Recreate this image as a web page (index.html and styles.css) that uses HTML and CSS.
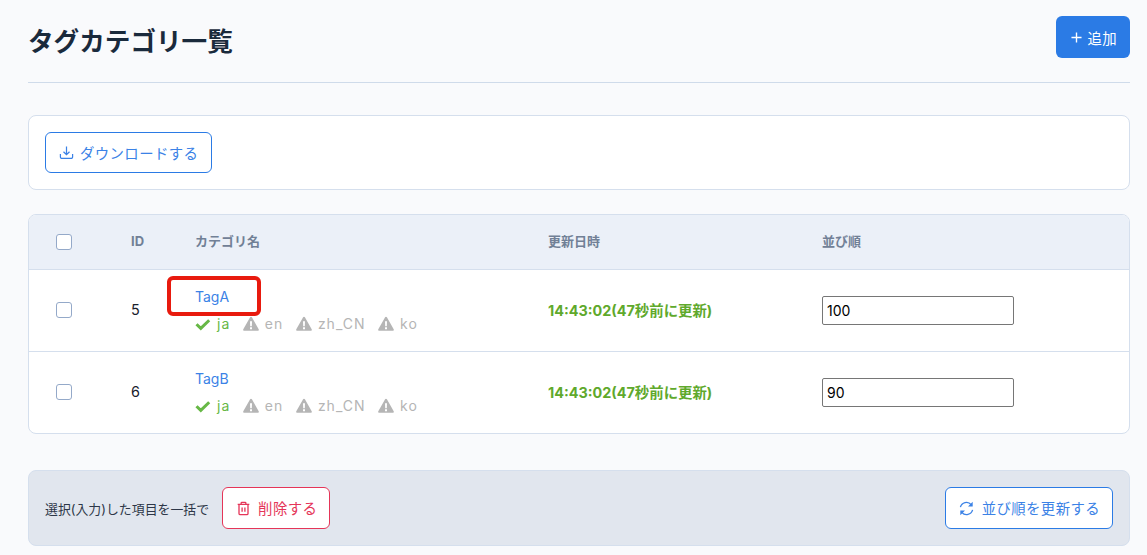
FILE: index.html
```html
<!DOCTYPE html>
<html lang="ja">
<head>
	<meta charset="utf-8">
	<meta name="viewport" content="width=device-width, initial-scale=1.0">
	<title>タグカテゴリ一覧</title>
	<link rel="stylesheet" href="styles.css">
</head>
<body>
	<div class="page">
		<header class="page-head">
			<h1>タグカテゴリ一覧</h1>
			<a class="btn btn-primary btn-add" href="#">
				<svg class="ico-plus" viewBox="0 0 12 12"><path d="M6 .5v11M.5 6h11" fill="none" stroke="currentColor" stroke-width="1.5"/></svg>
				追加
			</a>
		</header>

		<div class="card tools">
			<a class="btn btn-outline btn-tool" href="#">
				<svg class="ico" viewBox="0 0 16 16"><path d="M8 1.500v8.700M4.800 7.200 8 10.400l3.200-3.200M1.500 9.500v3.300a1.500 1.500 0 0 0 1.500 1.500h10a1.500 1.500 0 0 0 1.500-1.500V9.500" fill="none" stroke="currentColor" stroke-width="1.300"/></svg>
				ダウンロードする
			</a>
		</div>

		<div class="card list">
			<table>
				<colgroup>
					<col class="col-check">
					<col class="col-id">
					<col class="col-name">
					<col class="col-date">
					<col>
				</colgroup>
				<thead>
					<tr>
						<th><span class="check"></span></th>
						<th>ID</th>
						<th>カテゴリ名</th>
						<th>更新日時</th>
						<th>並び順</th>
					</tr>
				</thead>
				<tbody>
					<tr>
						<td><span class="check"></span></td>
						<td class="cell-text">5</td>
						<td>
							<a class="tag-name" href="#">TagA</a>
							<div class="langs">
								<span class="lang lang-ok"><svg class="lang-ico" viewBox="0 0 16 16"><path d="M1.500 8.200 5.800 12.400 14.200 4.200" fill="none" stroke="currentColor" stroke-width="3"/></svg>ja</span>
								<span class="lang"><svg class="lang-ico" viewBox="0 0 16 16"><path fill-rule="evenodd" d="M8 .8c.4 0 .7.2.9.5l6.800 11.900c.4.7-.1 1.500-.9 1.500H1.200c-.8 0-1.300-.8-.9-1.500L7.100 1.300c.2-.3.5-.5.900-.5ZM7 5.200l.2 5h1.600l.2-5H7Zm0 6.100v1.900h2v-1.900H7Z" fill="currentColor"/></svg>en</span>
								<span class="lang"><svg class="lang-ico" viewBox="0 0 16 16"><path fill-rule="evenodd" d="M8 .8c.4 0 .7.2.9.5l6.800 11.900c.4.7-.1 1.500-.9 1.500H1.200c-.8 0-1.300-.8-.9-1.500L7.100 1.300c.2-.3.5-.5.900-.5ZM7 5.200l.2 5h1.600l.2-5H7Zm0 6.100v1.900h2v-1.900H7Z" fill="currentColor"/></svg>zh_CN</span>
								<span class="lang"><svg class="lang-ico" viewBox="0 0 16 16"><path fill-rule="evenodd" d="M8 .8c.4 0 .7.2.9.5l6.800 11.900c.4.7-.1 1.500-.9 1.500H1.200c-.8 0-1.300-.8-.9-1.500L7.100 1.300c.2-.3.5-.5.900-.5ZM7 5.200l.2 5h1.600l.2-5H7Zm0 6.100v1.900h2v-1.900H7Z" fill="currentColor"/></svg>ko</span>
							</div>
							<span class="highlight"></span>
						</td>
						<td class="cell-text updated">14:43:02(47秒前に更新)</td>
						<td><input class="order" type="text" value="100"></td>
					</tr>
					<tr>
						<td><span class="check"></span></td>
						<td class="cell-text">6</td>
						<td>
							<a class="tag-name" href="#">TagB</a>
							<div class="langs">
								<span class="lang lang-ok"><svg class="lang-ico" viewBox="0 0 16 16"><path d="M1.500 8.200 5.800 12.400 14.200 4.200" fill="none" stroke="currentColor" stroke-width="3"/></svg>ja</span>
								<span class="lang"><svg class="lang-ico" viewBox="0 0 16 16"><path fill-rule="evenodd" d="M8 .8c.4 0 .7.2.9.5l6.800 11.900c.4.7-.1 1.500-.9 1.500H1.200c-.8 0-1.300-.8-.9-1.500L7.100 1.300c.2-.3.5-.5.900-.5ZM7 5.200l.2 5h1.600l.2-5H7Zm0 6.100v1.900h2v-1.900H7Z" fill="currentColor"/></svg>en</span>
								<span class="lang"><svg class="lang-ico" viewBox="0 0 16 16"><path fill-rule="evenodd" d="M8 .8c.4 0 .7.2.9.5l6.800 11.900c.4.7-.1 1.500-.9 1.500H1.200c-.8 0-1.300-.8-.9-1.500L7.100 1.300c.2-.3.5-.5.900-.5ZM7 5.200l.2 5h1.600l.2-5H7Zm0 6.100v1.900h2v-1.900H7Z" fill="currentColor"/></svg>zh_CN</span>
								<span class="lang"><svg class="lang-ico" viewBox="0 0 16 16"><path fill-rule="evenodd" d="M8 .8c.4 0 .7.2.9.5l6.800 11.900c.4.7-.1 1.500-.9 1.500H1.200c-.8 0-1.300-.8-.9-1.500L7.100 1.300c.2-.3.5-.5.900-.5ZM7 5.200l.2 5h1.600l.2-5H7Zm0 6.100v1.900h2v-1.900H7Z" fill="currentColor"/></svg>ko</span>
							</div>
						</td>
						<td class="cell-text updated">14:43:02(47秒前に更新)</td>
						<td><input class="order" type="text" value="90"></td>
					</tr>
				</tbody>
			</table>
		</div>

		<footer class="bulk">
			<div class="bulk-left">
				<span class="bulk-label">選択(入力)した項目を一括で</span>
				<a class="btn btn-danger" href="#">
					<svg class="ico" viewBox="0 0 16 16"><path d="M1.800 3.500h12.400M5.500 3.300V2.200c0-.5.3-.8.8-.8h3.400c.5 0 .8.300.8.800v1.100M3.200 3.700v9.600c0 .8.500 1.300 1.300 1.300h7c.8 0 1.300-.5 1.300-1.300V3.700M6.500 6.800v4.600M9.500 6.800v4.600" fill="none" stroke="currentColor" stroke-width="1.400"/></svg>
					<span class="btn-label">削除する</span>
				</a>
			</div>
			<a class="btn btn-outline" href="#">
				<svg class="ico" viewBox="0 0 16 16"><path d="M1.500 6.500A6.600 6.600 0 0 1 13 3.900M14.500 9.500A6.600 6.600 0 0 1 3 12.100" fill="none" stroke="currentColor" stroke-width="1.400"/><path d="M14.600 .8v5H9.600zM1.400 15.200v-5h5z" fill="currentColor"/></svg>
				<span class="btn-label">並び順を更新する</span>
			</a>
		</footer>
	</div>
</body>
</html>
```

FILE: styles.css
```css
* {
	box-sizing: border-box;
}

html, body {
	height: 100%;
}

body {
	margin: 0;
	overflow: hidden;
	background-color: #f9fafc;
	color: #1a202c;
	font-family: Inter, "Noto Sans CJK JP", sans-serif;
	font-size: 14.4px;
}

.page {
	padding: 16px 17px 0 28px;
}

.page-head {
	display: flex;
	justify-content: space-between;
	align-items: flex-start;
	height: 67px;
	border-bottom: 1px solid #cfdbea;
}

h1 {
	margin: 7px 0 0;
	color: #1a2a3c;
	font-size: 25.6px;
	line-height: 38px;
	font-weight: 700;
}

.btn {
	display: inline-flex;
	align-items: center;
	gap: 8px;
	height: 42px;
	padding: 0 12px 0 13px;
	border: 1px solid transparent;
	border-radius: 6px;
	font-size: 14.4px;
	letter-spacing: 0.4px;
	text-decoration: none;
	white-space: nowrap;
}

.btn-label {
	padding-bottom: 2px;
}

.btn-primary {
	background-color: #2b7be5;
	color: #fff;
}

.btn-add {
	gap: 5px;
	padding: 0 12px 0 14px;
}

.btn-outline {
	background-color: #fff;
	border-color: #2b7be5;
	color: #3b82e6;
}

.btn-tool {
	gap: 6px;
	height: 41px;
	padding-right: 13px;
}

.btn-danger {
	gap: 7px;
	background-color: #fff;
	border-color: #e53558;
	color: #e53558;
}

.ico {
	width: 15px;
	height: 15px;
	flex: none;
}

.ico-plus {
	width: 11px;
	height: 11px;
	flex: none;
}

.card {
	background-color: #fff;
	border: 1px solid #d5dfed;
	border-radius: 8px;
}

.tools {
	height: 75px;
	margin-top: 32px;
	padding: 16px;
}

.list {
	height: 220px;
	margin-top: 24px;
	overflow: hidden;
}

table {
	width: 100%;
	border-collapse: collapse;
	table-layout: fixed;
}

.col-check {
	width: 102px;
}

.col-id {
	width: 64px;
}

.col-name {
	width: 353px;
}

.col-date {
	width: 274px;
}

th {
	height: 54px;
	padding: 0 0 2px;
	background-color: #ebf0f8;
	border-bottom: 1px solid #d5dfed;
	color: #718096;
	font-size: 13px;
	font-weight: 700;
	text-align: left;
}

td {
	position: relative;
	height: 82px;
	padding: 0;
	border-bottom: 1px solid #d5dfed;
	font-size: 14.4px;
}

tr:last-child td {
	border-bottom: none;
}

th:first-child, td:first-child {
	padding: 0 0 0 27px;
}

.cell-text {
	padding-bottom: 2px;
}

.check {
	display: block;
	width: 16px;
	height: 16px;
	background-color: #fff;
	border: 1px solid #94a9c9;
	border-radius: 3px;
}

.tag-name {
	display: block;
	margin-top: 1px;
	color: #3b82e6;
	font-size: 14px;
	line-height: 20px;
	text-decoration: none;
}

.langs {
	display: flex;
	gap: 12.6px;
	margin-top: 7px;
	color: #b5b5b5;
	font-size: 14px;
	letter-spacing: 1px;
	line-height: 20px;
}

.lang {
	display: flex;
	align-items: center;
	gap: 6px;
}

.lang-ok {
	color: #67b846;
}

.lang-ico {
	width: 16px;
	height: 16px;
	flex: none;
}

.highlight {
	position: absolute;
	left: -28px;
	top: 6px;
	width: 94px;
	height: 40px;
	border: 4px solid #e81a0e;
	border-radius: 6px;
}

.updated {
	color: #5fa92c;
	font-weight: 700;
}

.order {
	display: block;
	width: 192px;
	height: 29px;
	padding: 1px 4px;
	background-color: #fff;
	border: 1px solid #767676;
	border-radius: 2px;
	color: #000;
	font-family: inherit;
	font-size: 14px;
}

.bulk {
	display: flex;
	justify-content: space-between;
	align-items: center;
	height: 76px;
	margin-top: 36px;
	padding: 0 16px;
	background-color: #e1e6ee;
	border: 1px solid #d5dfed;
	border-radius: 8px;
}

.bulk-left {
	display: flex;
	align-items: center;
	gap: 13px;
}

.bulk-label {
	color: #2d3748;
	font-size: 12.9px;
}
```
